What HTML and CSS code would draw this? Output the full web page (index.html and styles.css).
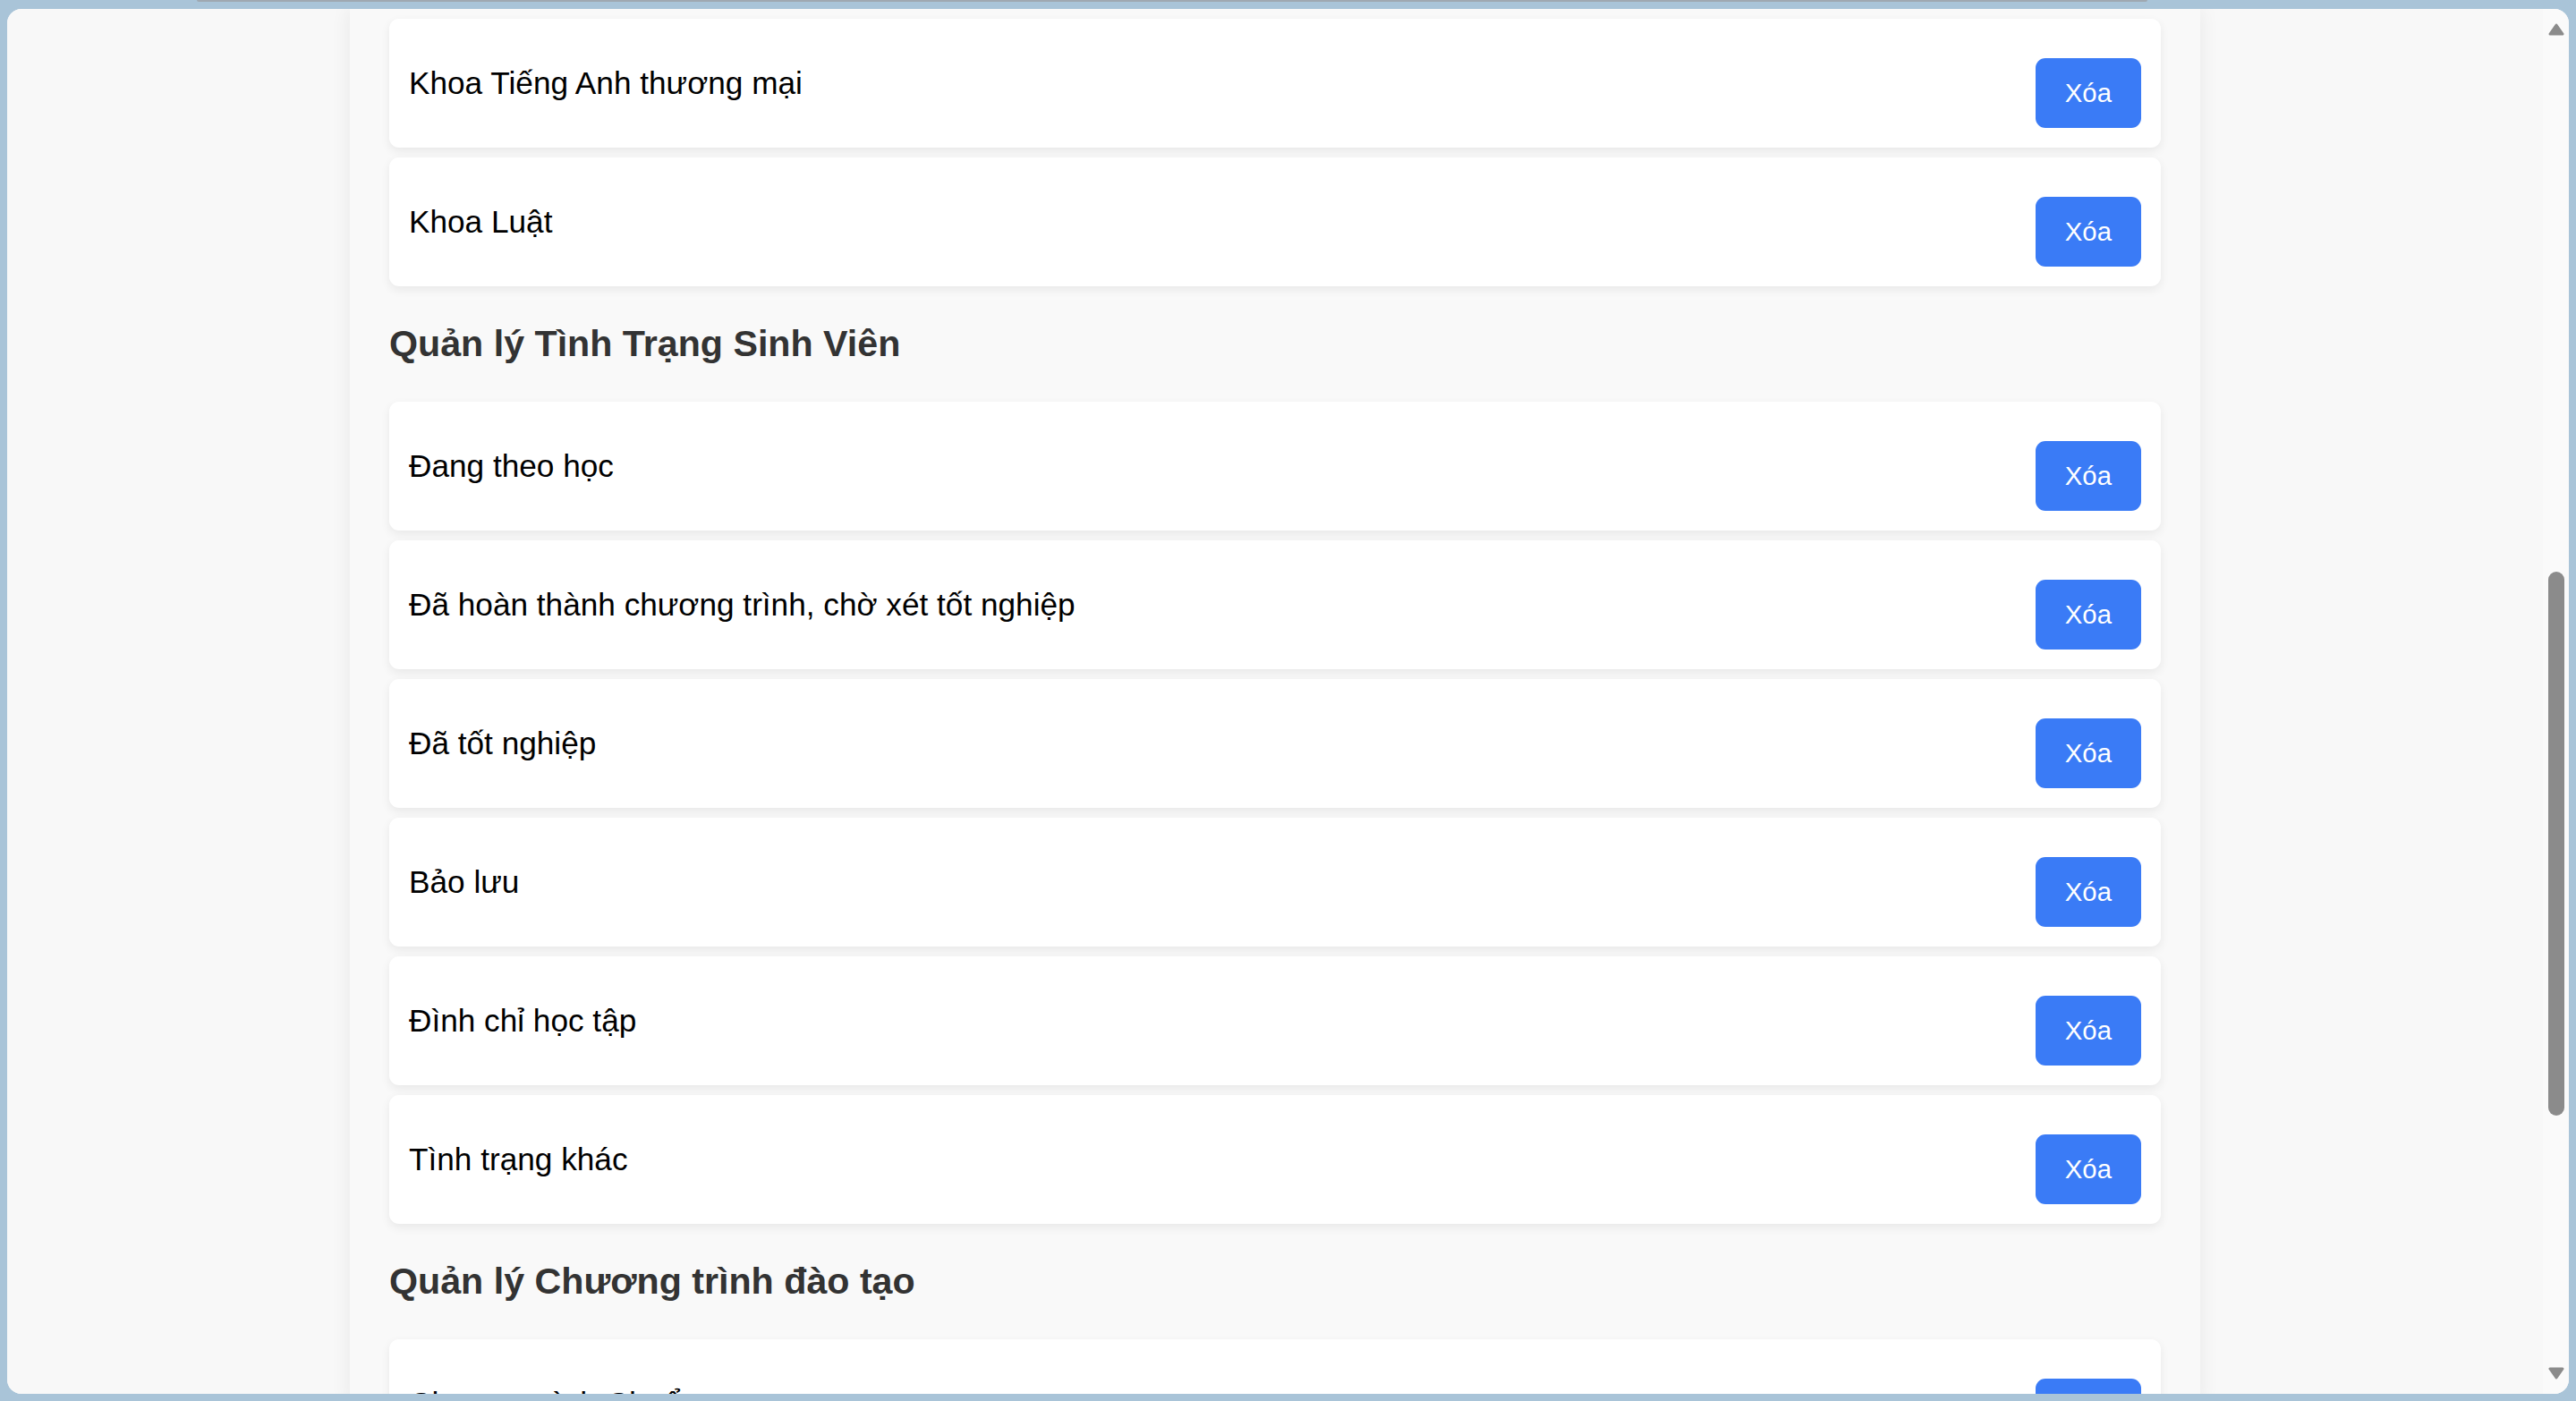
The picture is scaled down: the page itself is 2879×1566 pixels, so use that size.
FILE: index.html
```html
<!DOCTYPE html>
<html lang="vi">
<head>
<meta charset="utf-8">
<title>Quản lý</title>
<link rel="stylesheet" href="styles.css">
</head>
<body>
<div class="tabedge"></div>
<div class="window">
  <div class="viewport">
    <div class="container">
      <ul class="list">
        <li class="item"><span class="name">Khoa Tiếng Anh thương mại</span><button class="btn">Xóa</button></li>
        <li class="item"><span class="name">Khoa Luật</span><button class="btn">Xóa</button></li>
      </ul>
      <h3 class="section-title">Quản lý Tình Trạng Sinh Viên</h3>
      <ul class="list">
        <li class="item"><span class="name">Đang theo học</span><button class="btn">Xóa</button></li>
        <li class="item"><span class="name">Đã hoàn thành chương trình, chờ xét tốt nghiệp</span><button class="btn">Xóa</button></li>
        <li class="item"><span class="name">Đã tốt nghiệp</span><button class="btn">Xóa</button></li>
        <li class="item"><span class="name">Bảo lưu</span><button class="btn">Xóa</button></li>
        <li class="item"><span class="name">Đình chỉ học tập</span><button class="btn">Xóa</button></li>
        <li class="item"><span class="name">Tình trạng khác</span><button class="btn">Xóa</button></li>
      </ul>
      <h3 class="section-title">Quản lý Chương trình đào tạo</h3>
      <ul class="list">
        <li class="item"><span class="name">Chương trình Chuẩn</span><button class="btn">Xóa</button></li>
        <li class="item"><span class="name">Chương trình Chất lượng cao</span><button class="btn">Xóa</button></li>
      </ul>
    </div>
  </div>
  <div class="scrollbar">
    <svg class="arrow arrow-up" width="18" height="14" viewBox="0 0 18 14"><polygon points="9,2 16,12 2,12" fill="#8b8b8b" stroke="#8b8b8b" stroke-width="3" stroke-linejoin="round"/></svg>
    <div class="thumb"></div>
    <svg class="arrow arrow-down" width="18" height="14" viewBox="0 0 18 14"><polygon points="2,2 16,2 9,12" fill="#8b8b8b" stroke="#8b8b8b" stroke-width="3" stroke-linejoin="round"/></svg>
  </div>
</div>
</body>
</html>
```
FILE: styles.css
```css
html, body {
  margin: 0;
  padding: 0;
}
body {
  width: 2879px;
  height: 1566px;
  overflow: hidden;
  background: #a9c4d8;
  font-family: "Liberation Sans", Arial, sans-serif;
  position: relative;
}
.tabedge {
  position: absolute;
  left: 220px;
  top: 0;
  width: 2180px;
  height: 2px;
  background: #9fa8b1;
  border-radius: 0 0 3px 3px;
}
.window {
  margin: 10px 8px 0 8px;
  width: 2863px;
  height: 1548px;
  border-radius: 16px;
  overflow: hidden;
  display: flex;
  background: #f8f8f8;
}
.viewport {
  flex: 1;
  overflow: hidden;
  background: #f8f8f8;
}
.container {
  width: 1980px;
  margin: 0 auto;
  padding: 11px 44px 0 44px;
  height: 100%;
  background: #f9f9f9;
  box-shadow: 0 0 22px rgba(0, 0, 0, 0.07);
}
.list {
  list-style: none;
  margin: 0;
  padding: 0;
}
.item {
  display: flex;
  justify-content: space-between;
  align-items: center;
  padding: 22px;
  margin-bottom: 11px;
  background: #ffffff;
  border-radius: 11px;
  box-shadow: 0 4px 11px rgba(0, 0, 0, 0.07);
}
.name {
  font-size: 35.2px;
  color: #000;
}
.btn {
  margin-top: 22px;
  font-family: "Liberation Sans", Arial, sans-serif;
  font-size: 29.33px;
  line-height: normal;
  padding: 22px 33px;
  border: none;
  border-radius: 11px;
  background: #3a7bf6;
  color: #ffffff;
}
.section-title {
  font-size: 41.2px;
  font-weight: bold;
  color: #333333;
  margin: 41px 0;
}
.scrollbar {
  width: 29px;
  background: #fafafa;
  position: relative;
}
.arrow {
  position: absolute;
  left: 6px;
}
.arrow-up {
  top: 16px;
}
.arrow-down {
  top: 1518px;
}
.thumb {
  position: absolute;
  left: 6px;
  top: 629px;
  width: 18px;
  height: 608px;
  border-radius: 9px;
  background: #8b8b8b;
}
```
